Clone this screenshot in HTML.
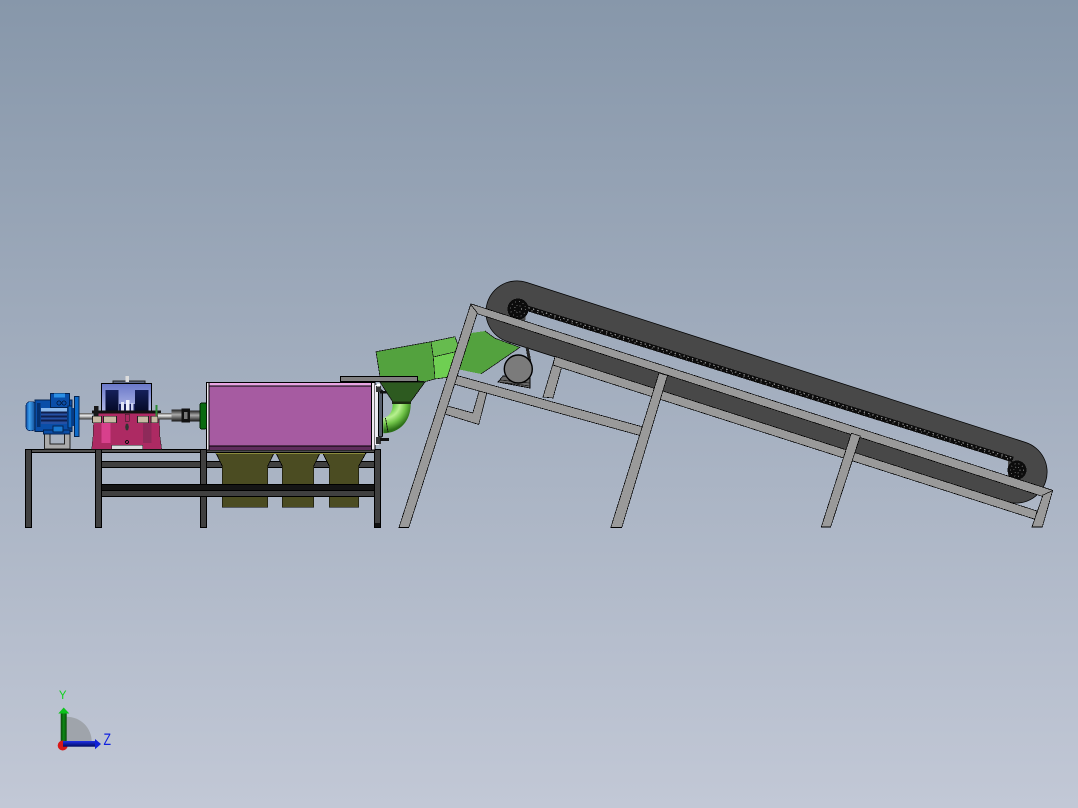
<!DOCTYPE html>
<html><head><meta charset="utf-8"><style>
html,body{margin:0;padding:0;width:1078px;height:808px;overflow:hidden;background:linear-gradient(#8797aa,#c2c8d6)}
svg{display:block;position:absolute;left:0;top:0}
</style></head><body>
<svg width="1078" height="808" viewBox="0 0 1078 808" xmlns="http://www.w3.org/2000/svg">
<defs>
<linearGradient id="bg" gradientUnits="userSpaceOnUse" x1="0" y1="0" x2="0" y2="808"><stop offset="0" stop-color="#8797aa"/><stop offset="1" stop-color="#c2c8d6"/></linearGradient>
<linearGradient id="shaft" x1="0" y1="0" x2="0" y2="1"><stop offset="0" stop-color="#555"/><stop offset=".4" stop-color="#eee"/><stop offset="1" stop-color="#333"/></linearGradient>
<linearGradient id="coup" x1="0" y1="0" x2="0" y2="1"><stop offset="0" stop-color="#1a1a1a"/><stop offset=".45" stop-color="#a8a8a8"/><stop offset="1" stop-color="#1a1a1a"/></linearGradient>
<linearGradient id="cap" x1="0" y1="0" x2="1" y2="0"><stop offset="0" stop-color="#0a4ea8"/><stop offset=".35" stop-color="#3fa0ee"/><stop offset="1" stop-color="#063a84"/></linearGradient>
<linearGradient id="top" x1="0" y1="0" x2="0" y2="1"><stop offset="0" stop-color="#6a78c8"/><stop offset="1" stop-color="#b0b8e8"/></linearGradient>
<linearGradient id="nav" x1="0" y1="0" x2="0" y2="1"><stop offset="0" stop-color="#15205a"/><stop offset="1" stop-color="#050a28"/></linearGradient>
<radialGradient id="elbow" gradientUnits="userSpaceOnUse" cx="385" cy="403" r="30"><stop offset=".25" stop-color="#58c438"/><stop offset=".5" stop-color="#b8f090"/><stop offset=".7" stop-color="#70c448"/><stop offset=".92" stop-color="#2c7018"/></radialGradient>
<linearGradient id="gy" x1="0" y1="0" x2="1" y2="0"><stop offset="0" stop-color="#0a4a0a"/><stop offset=".5" stop-color="#0c8a14"/><stop offset="1" stop-color="#0a4a0a"/></linearGradient>
<linearGradient id="bz" x1="0" y1="0" x2="0" y2="1"><stop offset="0" stop-color="#2030e8"/><stop offset="1" stop-color="#000a60"/></linearGradient>
</defs>
<rect width="1078" height="808" fill="url(#bg)"/>

<g shape-rendering="crispEdges" stroke-linejoin="miter">
<!-- belt -->
<line x1="517" y1="312" x2="1016" y2="472" stroke="#000" stroke-width="63" stroke-linecap="round" shape-rendering="auto"/>
<line x1="517" y1="312" x2="1016" y2="472" stroke="#484848" stroke-width="61.5" stroke-linecap="round" shape-rendering="auto"/>
<polygon points="527,307 1008,461 1008,478 525,322" fill="url(#bg)"/>
<!-- chain -->
<line x1="520" y1="306" x2="1013" y2="459.500" stroke="#0c0c0c" stroke-width="5.500"/>
<line x1="520" y1="305" x2="1013" y2="458.500" stroke="#888" stroke-width="1.200" stroke-dasharray="1.500 3"/>
<line x1="520" y1="307" x2="1013" y2="460.500" stroke="#777" stroke-width="1.200" stroke-dasharray="1 5"/>
<circle cx="518" cy="309" r="10.500" fill="#0c0c0c"/>
<circle cx="518" cy="309" r="7.500" fill="none" stroke="#666" stroke-width="1" stroke-dasharray="1 3"/>
<circle cx="518" cy="309" r="3.500" fill="none" stroke="#666" stroke-width="1" stroke-dasharray="1 2"/>
<circle cx="1017" cy="470" r="9.500" fill="#0c0c0c"/>
<circle cx="1017" cy="470" r="6.500" fill="none" stroke="#666" stroke-width="1" stroke-dasharray="1 3"/>
<circle cx="1017" cy="470" r="3" fill="none" stroke="#666" stroke-width="1" stroke-dasharray="1 2"/>

<!-- conveyor motor -->
<path d="M509,343 L511,350 M527,347 L530,363" stroke="#222" stroke-width="3"/>
<polygon points="503,376 530,378 530,388 498,382" fill="#666" stroke="#000" stroke-width=".8"/>
<path d="M500,380 L530,383 M499,382 L530,386" stroke="#222" stroke-width=".8"/>
<circle cx="518.300" cy="369" r="14" fill="#7b7b7b" stroke="#000" stroke-width="1.400" shape-rendering="auto"/>

<!-- chutes -->
<polygon points="469.300,333.300 485,331 495,338.300 520,347.300 481,374 458.300,369.300" fill="#53a23e"/>
<path d="M485,331 L495,338.300 L520,347.300 L481,374" fill="none" stroke="#111" stroke-width=".7"/>
<polygon points="376,351.700 431,341.700 433.300,357 435,379 425,381.700 380,376.700" fill="#53a23e" stroke="#111" stroke-width=".7"/>
<polygon points="431,341.700 455,336.700 460,350.700 433.300,357" fill="#66bb4e" stroke="#111" stroke-width=".7"/>
<polygon points="433.300,357 460,350.700 452,376.700 435,379" fill="#6fcf52" stroke="#111" stroke-width=".7"/>

<!-- conveyor frame -->
<g fill="#9a9a9a" stroke="#000" stroke-width=".7">
<polygon points="555,357 562,366 553,398 543,397"/>
<polygon points="481.500,383 488.800,385 478.800,424.500 443,413.500 445.700,405.500 472.800,413"/>
<polygon points="455,375 643,427 640,435.500 452,383.500"/>
<polygon points="555,356.500 1037,511 1035,519.300 553,365"/>
<polygon points="470.700,303.800 1052.300,490.200 1050,498.800 476,313.300"/>
<polygon points="470.700,304.300 477.300,313 408.800,527.500 399,527.500"/>
<polygon points="659,373 667.500,375.500 621.800,527.500 610.800,527.500"/>
<polygon points="851.300,433.300 860.300,436 830.600,527 821.300,527"/>
<polygon points="1043,495 1052.600,490.700 1042.300,527 1032,527"/>
</g>

<!-- table back bars -->
<g fill="#404040" stroke="#000" stroke-width="1">
<rect x="101.500" y="461.500" width="273" height="6"/>
</g>

<!-- hoppers -->
<g stroke="#000" stroke-width=".8" fill="#4b4c22">
<polygon points="216,453 274,453 267.700,466 267.700,507.300 222.300,507.300 222.300,466"/>
<polygon points="276,453 320,453 313.700,466 313.700,507.300 282.300,507.300 282.300,466"/>
<polygon points="322.700,453 366,453 358.700,466 358.700,507.300 329.300,507.300 329.300,466"/>
</g>
<polygon points="215,450 366,450 365,454 216,454" fill="#8b8c3e"/>

<!-- table -->
<g fill="#404040" stroke="#000" stroke-width="1">
<rect x="25.500" y="449.500" width="355" height="3" fill="#505050"/>
<rect x="25.500" y="449.500" width="6" height="78"/>
<rect x="95.500" y="449.500" width="6" height="78"/>
<rect x="200.500" y="449.500" width="6" height="78"/>
<rect x="374.500" y="449.500" width="6" height="78"/>
<rect x="101.500" y="484.500" width="273" height="6" fill="#151515"/>
<rect x="101.500" y="490.500" width="273" height="6"/>
</g>
<rect x="375" y="523" width="5" height="4" fill="#111"/>

<!-- purple box -->
<rect x="206.700" y="382.300" width="168.300" height="67.700" fill="#f0e8f0" stroke="#000" stroke-width="1"/>
<rect x="209.500" y="383" width="162" height="3.500" fill="#eaa6e4"/>
<rect x="209.500" y="386" width="162" height="60" fill="#a65ba1"/>
<rect x="209.500" y="446" width="162" height="4" fill="#5f2d5c"/>
<path d="M209,386 H372 M209,446 H372 M209,383 V450 M371.500,383 V450" stroke="#000" stroke-width="1" fill="none"/>

<!-- right flange -->
<rect x="375" y="385" width="4" height="60" fill="#eceaf0"/>
<rect x="378.500" y="390" width="4" height="47" rx="1.500" fill="#59606e" stroke="#000" stroke-width="1.200"/>
<rect x="376" y="386" width="5" height="6" fill="#333"/>
<rect x="376" y="437" width="5" height="7" fill="#333"/>
<rect x="380" y="391" width="8" height="2.500" fill="#111"/>
<rect x="380" y="438" width="9" height="3" fill="#111"/>
<rect x="377" y="383.500" width="3" height="3" fill="#fff"/>

<!-- elbow and funnel -->
<path d="M392.700,404 C392.700,411 390,416 383.300,418.300 L383.300,433.300 C400,433 410.700,421 410.700,404 Z" fill="url(#elbow)" shape-rendering="auto"/>
<path d="M385.500,418 L388,432" stroke="#111" stroke-width=".8"/>
<polygon points="380,382 425,382 410.700,401.700 392.700,401.700" fill="#2d5a20" stroke="#111" stroke-width=".8"/>
<rect x="392" y="401.500" width="19" height="2.500" fill="#1a2a10"/>
<rect x="340.500" y="376.500" width="77" height="5" fill="#808080" stroke="#000"/>

<!-- motor -->
<rect x="44.500" y="433.500" width="25.500" height="15.500" fill="#aaa" stroke="#222"/>
<rect x="50" y="433.500" width="14.300" height="10.500" fill="#a8b2c0" stroke="#222"/>
<rect x="79" y="413" width="13" height="6.500" fill="url(#shaft)"/>
<rect x="26" y="401.700" width="10" height="29" rx="4" fill="url(#cap)" stroke="#0a2c66" stroke-width=".8"/>
<rect x="35" y="400" width="37" height="31.500" fill="#0a4ea8" stroke="#04234f"/>
<rect x="50.500" y="393.500" width="19" height="14" fill="#0a4ea8" stroke="#04234f"/>
<rect x="54" y="393.500" width="11" height="4" fill="#2b90e6"/>
<circle cx="59" cy="403" r="2" fill="none" stroke="#04234f"/>
<circle cx="64" cy="403" r="2" fill="none" stroke="#04234f"/>
<g fill="#2550a4"><rect x="41" y="408" width="26" height="3.500" fill="#8ab8ec"/><rect x="41" y="411.500" width="26" height="2" fill="#10204e"/><rect x="41" y="413.500" width="26" height="2"/><rect x="41" y="415.500" width="26" height="2" fill="#10204e"/><rect x="41" y="417.500" width="26" height="2"/><rect x="41" y="419.500" width="26" height="2" fill="#10204e"/><rect x="41" y="421.500" width="26" height="2.500"/></g>
<rect x="37" y="403" width="3.500" height="24" fill="#05306e"/>
<rect x="43.500" y="430" width="26.500" height="4" fill="#0a4ea8" stroke="#04234f" stroke-width=".6"/>
<rect x="53" y="426" width="10" height="6" fill="#1a78d0" stroke="#04234f" stroke-width=".6"/>
<rect x="68" y="406" width="4" height="22" fill="#0c63c0" stroke="#04234f" stroke-width=".6"/>
<rect x="72" y="408" width="3" height="18" fill="#063c88"/>
<rect x="74.500" y="396.500" width="4.500" height="40" fill="#0e6ccc" stroke="#04234f" stroke-width=".8"/>

<!-- gearbox -->
<rect x="113" y="381" width="32" height="3" fill="#5c6680" stroke="#222" stroke-width=".6"/>
<rect x="125.500" y="376" width="3.500" height="6" fill="#ddd"/>
<rect x="101.700" y="383.500" width="50" height="28" fill="url(#top)" stroke="#000" stroke-width="1"/>
<rect x="105.700" y="390" width="12.700" height="21" fill="url(#nav)"/>
<rect x="135" y="390" width="13.300" height="21" fill="url(#nav)"/>
<rect x="119" y="404" width="16" height="7" fill="#1a2260"/>
<rect x="121" y="402" width="3" height="9" fill="#dfe4f6"/>
<rect x="126" y="400" width="3.500" height="11" fill="#eef0fb"/>
<rect x="131" y="403" width="2.500" height="8" fill="#c8cff0"/>
<polygon points="94,413 159,413 160,437 161.700,449.300 91.700,449.300 93,437" fill="#ad2a63" stroke="#222" stroke-width=".5"/>
<rect x="101.700" y="422" width="9" height="21" fill="#d8408c"/>
<rect x="143" y="422" width="8.700" height="21" fill="#8e2a5a"/>
<rect x="111.700" y="445.300" width="31" height="4" fill="#d8dade" stroke="#222" stroke-width=".5"/>
<rect x="92" y="410.500" width="69" height="3" fill="#111"/>
<rect x="94" y="406" width="4.500" height="16" fill="#181818"/>
<rect x="155.500" y="405" width="2" height="17" fill="#2c8a34"/>
<g fill="#c6baa4" stroke="#222" stroke-width=".6">
<rect x="92.500" y="416.300" width="9" height="6.500"/><rect x="103.500" y="416.300" width="13" height="6.500"/><rect x="137.500" y="416.300" width="11" height="6.500"/><rect x="151" y="416.300" width="7" height="6.500"/>
</g>
<rect x="125" y="414" width="4" height="7" fill="#ad2a63" stroke="#222" stroke-width=".5"/>
<ellipse cx="127" cy="427" rx="1.800" ry="3.500" fill="#333"/>
<circle cx="127" cy="442" r="1.500" fill="none" stroke="#111"/>
<!-- output shaft -->
<rect x="158" y="413" width="13.700" height="6.300" fill="url(#shaft)"/>
<rect x="171.700" y="409.300" width="10" height="12" fill="url(#coup)"/>
<rect x="181.700" y="408.700" width="8.300" height="14" fill="#111"/>
<rect x="184" y="412" width="3.500" height="7" fill="#777"/>
<rect x="190" y="410.300" width="10" height="11" fill="url(#coup)"/>
<rect x="200" y="403" width="6.700" height="26" rx="2" fill="#0a6a10" stroke="#032004" stroke-width="1"/>
</g>

<!-- triad -->
<path d="M66.700,716.700 A25,25 0 0 1 91.700,741.700 L66.700,741.700 Z" fill="#9fa4ab"/>
<rect x="60.700" y="713" width="6" height="29" fill="url(#gy)"/>
<polygon points="58.300,713.500 63.700,707.500 69.300,713.500" fill="#0cc41c"/>
<circle cx="62.700" cy="745.500" r="5" fill="#d81818"/>
<rect x="63" y="741" width="32" height="5.700" fill="url(#bz)"/>
<polygon points="95,739 101,744 95,749.300" fill="#1020d8"/>
<text x="62.700" y="699" font-family="'Liberation Sans',sans-serif" font-size="11.500" fill="#12d020" text-anchor="middle">Y</text>
<text transform="translate(103.500,745) scale(.72,1)" x="0" y="0" font-family="'Liberation Sans',sans-serif" font-size="17" fill="#1020e0">Z</text>
</svg>
</body></html>
